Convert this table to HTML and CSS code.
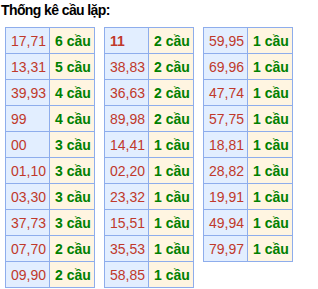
FILE: index.html
```html
<!DOCTYPE html>
<html lang="vi">
<head>
<meta charset="utf-8">
<title>Thống kê cầu lặp</title>
<link rel="stylesheet" href="styles.css">
</head>
<body>
<div class="title">Thống kê cầu lặp:</div>
<div class="tables">
  <table class="stat">
    <tr><td class="num">17,71</td><td class="cnt">6 cầu</td></tr>
    <tr><td class="num">13,31</td><td class="cnt">5 cầu</td></tr>
    <tr><td class="num">39,93</td><td class="cnt">4 cầu</td></tr>
    <tr><td class="num">99</td><td class="cnt">4 cầu</td></tr>
    <tr><td class="num">00</td><td class="cnt">3 cầu</td></tr>
    <tr><td class="num">01,10</td><td class="cnt">3 cầu</td></tr>
    <tr><td class="num">03,30</td><td class="cnt">3 cầu</td></tr>
    <tr><td class="num">37,73</td><td class="cnt">3 cầu</td></tr>
    <tr><td class="num">07,70</td><td class="cnt">2 cầu</td></tr>
    <tr><td class="num">09,90</td><td class="cnt">2 cầu</td></tr>
  </table>
  <table class="stat">
    <tr><td class="num strong">11</td><td class="cnt">2 cầu</td></tr>
    <tr><td class="num">38,83</td><td class="cnt">2 cầu</td></tr>
    <tr><td class="num">36,63</td><td class="cnt">2 cầu</td></tr>
    <tr><td class="num">89,98</td><td class="cnt">2 cầu</td></tr>
    <tr><td class="num">14,41</td><td class="cnt">1 cầu</td></tr>
    <tr><td class="num">02,20</td><td class="cnt">1 cầu</td></tr>
    <tr><td class="num">23,32</td><td class="cnt">1 cầu</td></tr>
    <tr><td class="num">15,51</td><td class="cnt">1 cầu</td></tr>
    <tr><td class="num">35,53</td><td class="cnt">1 cầu</td></tr>
    <tr><td class="num">58,85</td><td class="cnt">1 cầu</td></tr>
  </table>
  <table class="stat">
    <tr><td class="num">59,95</td><td class="cnt">1 cầu</td></tr>
    <tr><td class="num">69,96</td><td class="cnt">1 cầu</td></tr>
    <tr><td class="num">47,74</td><td class="cnt">1 cầu</td></tr>
    <tr><td class="num">57,75</td><td class="cnt">1 cầu</td></tr>
    <tr><td class="num">18,81</td><td class="cnt">1 cầu</td></tr>
    <tr><td class="num">28,82</td><td class="cnt">1 cầu</td></tr>
    <tr><td class="num">19,91</td><td class="cnt">1 cầu</td></tr>
    <tr><td class="num">49,94</td><td class="cnt">1 cầu</td></tr>
    <tr><td class="num">79,97</td><td class="cnt">1 cầu</td></tr>
  </table>
</div>
</body>
</html>
```
FILE: styles.css
```css
html, body {
  margin: 0;
  padding: 0;
  background: #ffffff;
}
body {
  font-family: "Liberation Sans", Arial, sans-serif;
}
.title {
  font-size: 14px;
  font-weight: bold;
  letter-spacing: -0.6px;
  line-height: 16px;
  color: #000000;
  padding: 2px 0 0 1px;
}
.tables {
  display: flex;
  align-items: flex-start;
  gap: 9px;
  padding: 9px 0 0 5px;
}
.stat {
  border-collapse: collapse;
  font-size: 14px;
}
.stat td {
  border: 1px solid #8eadec;
  height: 26px;
  padding: 0 0 0 5px;
  vertical-align: middle;
  white-space: nowrap;
  box-sizing: border-box;
}
.num {
  width: 44px;
  background: #e2eeff;
  color: #c0392b;
}
.strong {
  font-weight: bold;
}
.cnt {
  width: 45px;
  background: #fff5e1;
  color: #008000;
  font-weight: bold;
}
```
